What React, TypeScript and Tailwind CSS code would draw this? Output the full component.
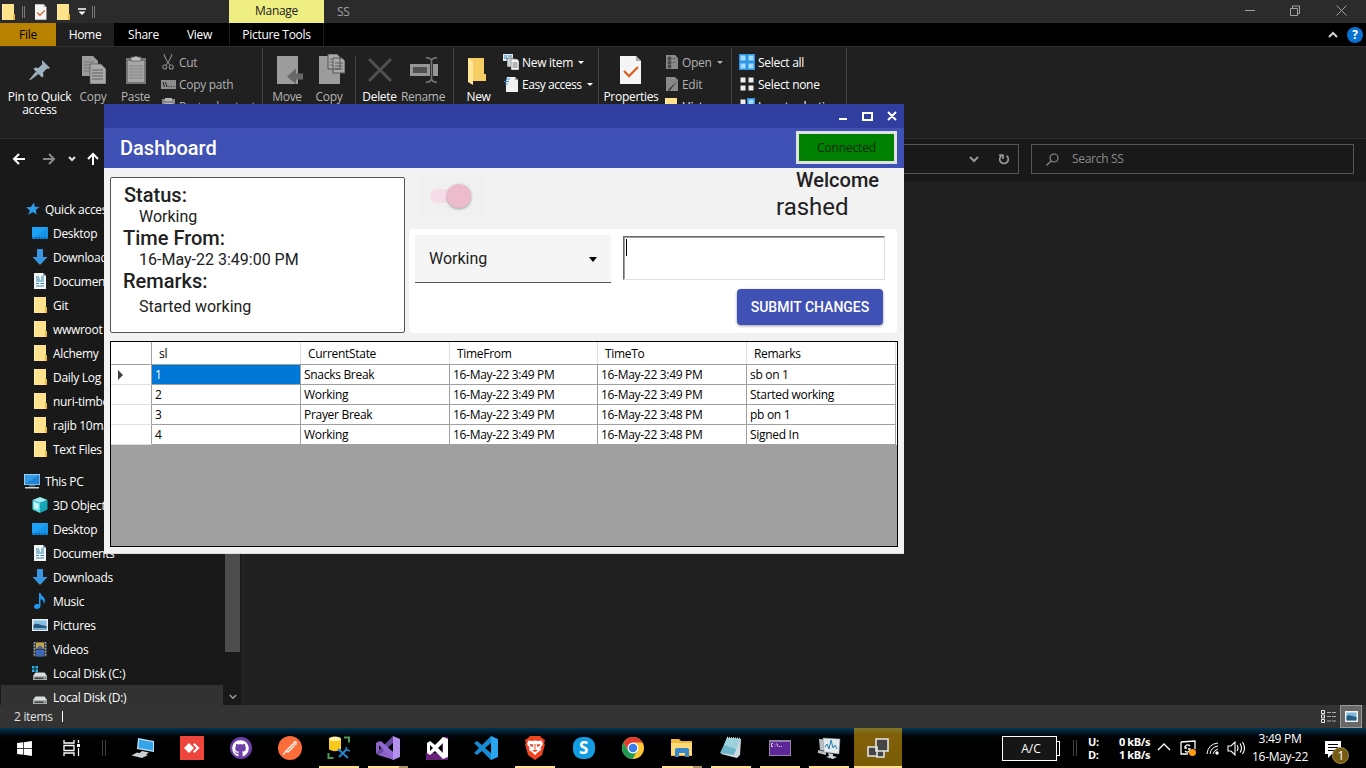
import type { ReactNode } from 'react';
import { FaGithub, FaWindows } from 'react-icons/fa';

type IconProps = { className?: string };

/* ---------- small file icons ---------- */

const Folder = ({ className = 'w-4 h-4' }: IconProps) => (
  <svg viewBox="0 0 16 16" className={className}>
    <path d="M2 0h12v10h1v6H2z" fill="#ffe38c" />
    <path d="M13 10h2v6h-2z" fill="#e8b93c" />
    <path d="M2 0h1v16H2z" fill="#fff0b8" />
  </svg>
);

const CheckDoc = ({ className = '' }: IconProps) => (
  <svg viewBox="0 0 22 28" className={className}>
    <path d="M0 0h16l5 5v23H0z" fill="#f5f5f5" />
    <path d="M16 0v5h5z" fill="#a9a9a9" />
    <path d="M4 15l5 5 9-9" stroke="#d9622b" strokeWidth="2.4" fill="none" />
  </svg>
);

const Star = () => (
  <svg viewBox="0 0 14 14" className="w-[14px] h-[14px]">
    <path d="M8 0.5l.8 4.300 4.900.3-3.800 2.700.7 4.700-3.700-2.500L2.200 13l1.700-4.600L0 5.300l4.900-.4z" fill="#2f9be8" />
  </svg>
);

const DesktopIcon = () => (
  <svg viewBox="0 0 16 16" className="w-4 h-4">
    <rect y="2" width="16" height="12" fill="#1ba1f5" />
    <path d="M0 14L16 2v12z" fill="#1593e6" />
    <path d="M0 13h16" stroke="#0b5fa8" strokeWidth="1.4" strokeDasharray="2 1" />
  </svg>
);

const DownIcon = () => (
  <svg viewBox="0 0 16 16" className="w-4 h-4">
    <path d="M5 0h6v8h4.5L8 16 .5 8H5z" fill="#3a96e2" />
  </svg>
);

const DocIcon = () => (
  <svg viewBox="0 0 16 16" className="w-4 h-4">
    <path d="M2 0h9l3 3v13H2z" fill="#f3f6f8" />
    <path d="M4 4h3M9 4h3M4 6h4M9 6h3M4 8h8M4 10.5h3M8.500 10.500h3.500M4 13h8" stroke="#3883ad" strokeWidth="1.200" />
    <path d="M11 0v3h3z" fill="#9aa7b0" />
  </svg>
);

const PcIcon = () => (
  <svg viewBox="0 0 16 16" className="w-4 h-4">
    <rect y="1" width="16" height="11" fill="#b9e4fa" />
    <rect x="0.700" y="1.700" width="14.600" height="9.600" fill="#379be6" />
    <path d="M.7 11.300L15.300 1.700v9.600z" fill="#2384d6" />
    <path d="M5 12h6v1.500H5z" fill="#62717a" />
    <path d="M1 14h14v1.500H1z" fill="#d3d8db" />
  </svg>
);

const CubeIcon = () => (
  <svg viewBox="0 0 16 16" className="w-4 h-4">
    <path d="M8 0l7.500 3-7.500 3L.5 3z" fill="#9cecf0" />
    <path d="M.5 3L8 6v10L.5 12.500z" fill="#5fdbe2" />
    <path d="M15.500 3L8 6v10l7.500-3.500z" fill="#17a5b8" />
    <path d="M2 5l4.500 1.800v6L2 11z" fill="#c7f7f8" />
  </svg>
);

const MusicIcon = () => (
  <svg viewBox="0 0 16 16" className="w-4 h-4">
    <path d="M7 0h1.500c.4 3 4.500 3.600 4.500 7.500 0 1.500-.5 2.700-1.300 3.500.4-2.500-.7-4.400-3.200-5V12.500C8.500 14.500 7 16 5 16s-3-1-3-2.500S3.300 11 5 11c.8 0 1.400.1 2 .4z" fill="#1e9bf0" />
  </svg>
);

const PictureIcon = () => (
  <svg viewBox="0 0 16 16" className="w-4 h-4">
    <rect y="2" width="16" height="12" fill="#e9eef1" />
    <rect x="1.500" y="3.500" width="13" height="9" fill="#85bfe6" />
    <path d="M1.500 8c3-3 6 0 13 1v3.500h-13z" fill="#27587c" />
    <path d="M1.500 11h13v1.500h-13z" fill="#7cb6dc" />
  </svg>
);

const VideoIcon = () => (
  <svg viewBox="0 0 16 16" className="w-4 h-4">
    <rect x="1" y="1" width="14" height="14.500" fill="#3d4043" />
    <rect x="4" y="1.500" width="8" height="6.500" fill="#c5a64c" />
    <rect x="4" y="9" width="8" height="6.500" fill="#3969c4" />
    <path d="M4 8l4-4 4 4zM5 14l3-3 4 4z" fill="#47669c" />
    <path d="M2.500 1v15M13.500 1v15" stroke="#aab0b3" strokeWidth="1.300" strokeDasharray="1.500 1.500" />
  </svg>
);

const DiskIcon = ({ system = false }: { system?: boolean }) => (
  <svg viewBox="0 0 16 16" className="w-4 h-4">
    {system && <path d="M0 1h2.500v2.500H0zM3.500 1H6v2.500H3.500zM0 4.500h2.500V7H0zM3.500 4.500H6V7H3.500z" fill="#27b5e8" />}
    <path d="M3.500 7.500h9L15 11H1z" fill="#d9dcdd" />
    <path d="M1 11h14v4H1z" fill="#a9adae" />
    <path d="M2.500 12.500h11v1.500h-11z" fill="#3a3d3e" />
    <path d="M11.500 12.600h1.500v1.200h-1.500z" fill="#9be37d" />
  </svg>
);

/* ---------- explorer chrome ---------- */

const Chevron = ({ className = '' }: IconProps) => (
  <svg viewBox="0 0 10 7" className={className} fill="none" stroke="currentColor" strokeWidth="2">
    <path d="M1 1l4 4 4-4" />
  </svg>
);

const TitleBar = () => (
  <div className="flex h-[23px] bg-[#2b2b2b]">
    <div className="flex w-[229px] items-center">
      <Folder className="w-[16px] h-[16px]" />
      <div className="ml-[6px] h-[12px] w-[3px] border-x border-[#777]" />
      <CheckDoc className="ml-[10px] h-[16px] w-[12px]" />
      <Folder className="ml-[8px] w-[16px] h-[16px]" />
      <svg viewBox="0 0 8 8" className="ml-[7px] h-[8px] w-[8px]">
        <path d="M0 1h8" stroke="#fff" strokeWidth="1.500" />
        <path d="M.5 3.500h7L4 7z" fill="#fff" />
      </svg>
      <div className="ml-[6px] h-[12px] w-[3px] border-x border-[#777]" />
    </div>
    <div className="flex w-[95px] items-center justify-center bg-[#eeee82] pb-[2px] text-[#222]">Manage</div>
    <div className="flex flex-1 items-center pl-[13px] text-[#a0a0a0]">SS</div>
    <svg viewBox="0 0 102 12" className="mr-[19px] mt-[4px] h-[12px] w-[102px]" fill="none" stroke="#a2a2a2">
      <path d="M0 6.500h10M45.500 4.500h7v7h-7zM47.500 4.500v-2.500h7v7.500h-2M91.500 1.500l10 10M101.500 1.500l-10 10" />
    </svg>
  </div>
);

const Tabs = () => (
  <div className="flex h-[23px] bg-black text-white">
    <div className="flex w-[56px] items-center justify-center bg-[#b88200] pt-px text-black">File</div>
    <div className="flex w-[58px] items-center justify-center bg-[#202020] pt-px">Home</div>
    <div className="flex w-[58px] items-center justify-center pt-px pl-px">Share</div>
    <div className="flex w-[57px] items-center justify-center pr-[2px] pt-px">View</div>
    <div className="flex w-[95px] items-center justify-center border-x border-[#1c1c1c] pt-px">Picture Tools</div>
    <div className="flex flex-1 items-center justify-end gap-[9px] pr-[3px]">
      <Chevron className="h-[7px] w-[10px] rotate-180 text-[#d0d0d0]" />
      <div className="flex h-4 w-4 items-center justify-center rounded-full bg-[#0873d1] text-[12px] font-bold">?</div>
    </div>
  </div>
);

const BigTool = ({ icon, label, className }: { icon: ReactNode; label: ReactNode; className: string }) => (
  <div className={`flex shrink-0 flex-col items-center text-center leading-[13px] ${className}`}>
    <div className="flex h-[42px] items-center justify-center pt-[2px]">{icon}</div>
    <div className="whitespace-nowrap">{label}</div>
  </div>
);

const SmallTool = ({ icon, label, dim = false, arrow = false }: { icon: ReactNode; label: string; dim?: boolean; arrow?: boolean }) => (
  <div className={`flex h-[22px] items-center whitespace-nowrap ${dim ? 'text-[#b0b0b0]' : 'text-white'}`}>
    <div className="flex w-[16px] shrink-0 justify-center">{icon}</div>
    <span className="ml-[3px] pt-px">{label}</span>
    {arrow && <span className="ml-[5px] h-0 w-0 border-x-[3px] border-t-[3px] border-x-transparent border-t-current" />}
  </div>
);

const Sep = ({ className = '' }: IconProps) => <div className={`w-px shrink-0 bg-[#454545] ${className}`} />;

const PinIcon = () => (
  <svg viewBox="0 0 22 22" className="h-[22px] w-[22px]" fill="#9fb1bd">
    <path d="M13 1l8 8-2 1-1-.5-4 4 .5 3.500-1.500 1.500L4.500 10 6 8.500l3.500.5 4-4-.5-1z" />
    <path d="M7 12.500l2.500 2.500L1.500 21l-1 0 .3-1z" />
  </svg>
);

const CopyIcon = () => (
  <svg viewBox="0 0 24 28" className="ml-[2px] h-[28px] w-[24px]">
    <path d="M0 0h11l5 5v15H0z" fill="#9b9b9b" />
    <path d="M2 6h10M2 9h10M2 12h10M2 15h10" stroke="#777" />
    <path d="M8 8h11l5 5v15H8z" fill="#a9a9a9" stroke="#555" strokeWidth="0.700" />
    <path d="M10 14h11M10 17h11M10 20h11M10 23h11" stroke="#626262" strokeWidth="1.200" />
  </svg>
);

const PasteIcon = () => (
  <svg viewBox="0 0 20 28" className="h-[28px] w-[20px]">
    <path d="M0 2h20v26H0z" fill="#777" />
    <path d="M2 5h16v21H2z" fill="#a6a6a6" />
    <path d="M5 1h3q2-2 4 0h3v4H5z" fill="#bbb" stroke="#555" strokeWidth="0.700" />
    <path d="M3 10h14M3 13h14M3 16h14M3 19h14M3 22h14" stroke="#858585" />
  </svg>
);

const MoveIcon = () => (
  <svg viewBox="0 0 26 28" className="ml-[5px] h-[28px] w-[26px]">
    <path d="M0 0h21v28H0z" fill="#9c9c9c" />
    <path d="M10 20.500l9-8v5h7v6h-7v4.500z" fill="#686868" />
  </svg>
);

const CopyToIcon = () => (
  <svg viewBox="0 0 26 30" className="mb-[2px] ml-[5px] h-[30px] w-[26px]">
    <path d="M0 2h21v28H0z" fill="#9c9c9c" />
    <path d="M9 0h9l3 3v12H9zM14 4h9l3 3v12H14z" fill="#aaa" stroke="#555" />
    <path d="M16 9h8M16 12h8M16 15h8M11 5h2M11 8h2M11 11h2" stroke="#5d5d5d" />
  </svg>
);

const RenameIcon = () => (
  <svg viewBox="0 0 28 26" className="ml-[2px] h-[26px] w-[28px]">
    <path d="M0 7h20v12H0zM23 7h5v12h-5z" fill="#969696" />
    <path d="M3 10h14v6H3z" fill="#505050" />
    <path d="M16 .7q5 0 5.500 3v18q-.5 3.500-5.500 3.500M27 .7q-5 0-5.500 3v18q.5 3.500 5.500 3.500" fill="none" stroke="#777" strokeWidth="1.600" />
  </svg>
);

const GridIcon = ({ kind }: { kind: 'all' | 'none' | 'invert' }) => (
  <svg viewBox="0 0 16 16" className="h-4 w-4">
    {kind === 'all' && <rect width="16" height="16" fill="#2d97e5" />}
    {kind === 'invert' && <path d="M8 0h8v16H8z" fill="#2d97e5" />}
    <path d="M1.500 1.500h5v5h-5zM1.500 9.500h5v5h-5z" fill={kind === 'all' ? '#a4daff' : '#eee'} />
    <path d="M9.500 1.500h5v5h-5zM9.500 9.500h5v5h-5z" fill={kind === 'none' ? '#eee' : '#a4daff'} />
  </svg>
);

const ScissorsIcon = () => (
  <svg viewBox="0 0 12 16" className="h-4 w-3" fill="none" stroke="#8b8b8b" strokeWidth="1.100">
    <path d="M2 0q1 5 6 11M10 0Q9 5 4 11" />
    <circle cx="2.700" cy="13" r="2" />
    <circle cx="9.300" cy="13" r="2" />
  </svg>
);

const PathIcon = () => (
  <svg viewBox="0 0 15 9" className="h-[9px] w-[15px]">
    <path d="M0 0h15v9H0z" fill="#8d8d8d" />
    <path d="M2 2l1.500 5M4.500 2L6 7M7.500 6.500h1M10 6.500h1M12.500 6.500h1" stroke="#222" />
  </svg>
);

const ShortcutIcon = () => (
  <svg viewBox="0 0 13 16" className="h-4 w-[13px]">
    <path d="M0 1h13v15H0z" fill="#888" />
    <path d="M3 0h7v3H3zM2.500 5h8v9h-8z" fill="#b5b5b5" />
    <path d="M5 11V7h4v4" fill="none" stroke="#444" />
  </svg>
);

const NewItemIcon = () => (
  <svg viewBox="0 0 16 16" className="h-4 w-4">
    <path d="M0 0h10v7H0z" fill="#dcecf5" />
    <path d="M1 2h3M5 2h4M1 4h3" stroke="#3f87b8" />
    <path d="M4 4h7v9H4z" fill="#cfd8de" stroke="#222" strokeWidth="0.500" />
    <path d="M8 5h6l2 2v9H8z" fill="#f3f3f3" stroke="#555" strokeWidth="0.500" />
    <path d="M9.500 9h5M9.500 11h5M9.500 13h5" stroke="#777" />
  </svg>
);

const EasyIcon = () => (
  <svg viewBox="0 0 16 16" className="h-4 w-4">
    <path d="M4 1h8l3 3v12H3V6z" fill="#f1f1f1" />
    <path d="M12 1v3h3z" fill="#999" />
    <path d="M3 3h4M1 5.500h5M2 8h3" stroke="#3095d8" strokeWidth="1.200" />
  </svg>
);

const OpenIcon = ({ pencil = false }: { pencil?: boolean }) => (
  <svg viewBox="0 0 13 16" className="h-4 w-[13px]">
    <path d="M1 1h9l3 3v11H1z" fill="#898989" />
    {pencil ? (
      <path d="M12.500 5L5 14.500l-2 1 .5-2.500z" fill="#444" />
    ) : (
      <path d="M3 3h3v3H3zM3 7h3v3H3zM3 11h3v3H3zM7.500 4.500h3M7.500 8.500h3" fill="#4d4d4d" stroke="#4d4d4d" strokeWidth="0.700" />
    )}
  </svg>
);

const Ribbon = () => (
  <div className="flex h-[93px] overflow-hidden border-y border-[#2f2f2f] bg-[#202020] pt-[1px] text-[#b4b4b4]">
    <BigTool className="w-[78px] pl-px text-white" icon={<PinIcon />} label={<>Pin to Quick<br />access</>} />
    <BigTool className="w-[30px]" icon={<CopyIcon />} label="Copy" />
    <BigTool className="w-[52px] pl-[3px]" icon={<PasteIcon />} label="Paste" />
    <div className="w-[102px] pt-[3px]">
      <SmallTool dim icon={<ScissorsIcon />} label="Cut" />
      <SmallTool dim icon={<PathIcon />} label="Copy path" />
      <SmallTool dim icon={<ShortcutIcon />} label="Paste shortcut" />
    </div>
    <Sep />
    <BigTool className="w-[48px]" icon={<MoveIcon />} label="Move" />
    <BigTool className="w-[36px]" icon={<CopyToIcon />} label="Copy" />
    <div className="w-[8px] shrink-0" />
    <Sep className="mt-[8px]" />
    <BigTool
      className="w-[46px] pl-px text-white"
      icon={
        <svg viewBox="0 0 24 24" className="h-6 w-6" stroke="#505050" strokeWidth="3">
          <path d="M1 1l22 22M23 1L1 23" />
        </svg>
      }
      label="Delete"
    />
    <BigTool className="w-[42px]" icon={<RenameIcon />} label="Rename" />
    <div className="w-[9px] shrink-0" />
    <Sep />
    <BigTool
      className="w-[48px] pl-px text-white"
      icon={
        <svg viewBox="0 0 18 28" className="mr-[3px] mt-[2px] h-[28px] w-[18px]">
          <path d="M0 1h16v16h2v7H0z" fill="#f5cd62" />
          <path d="M0 1l5 3v24l-5-3z" fill="#ffe69b" />
        </svg>
      }
      label="New"
    />
    <div className="w-[96px] pl-[1px] pt-[3px]">
      <SmallTool arrow icon={<NewItemIcon />} label="New item" />
      <div className="tracking-[-0.450px]">
        <SmallTool arrow icon={<EasyIcon />} label="Easy access" />
      </div>
    </div>
    <Sep />
    <BigTool className="w-[64px] text-white" icon={<CheckDoc className="h-[28px] w-[22px]" />} label="Properties" />
    <div className="w-[68px] pt-[3px]">
      <SmallTool dim arrow icon={<OpenIcon />} label="Open" />
      <SmallTool dim icon={<OpenIcon pencil />} label="Edit" />
      <SmallTool icon={<Folder className="h-4 w-4" />} label="History" />
    </div>
    <Sep />
    <div className="w-[114px] pl-[7px] pt-[3px]">
      <SmallTool icon={<GridIcon kind="all" />} label="Select all" />
      <SmallTool icon={<GridIcon kind="none" />} label="Select none" />
      <SmallTool icon={<GridIcon kind="invert" />} label="Invert selection" />
    </div>
    <Sep />
  </div>
);

const AddressRow = () => (
  <div className="flex h-[42px] items-center bg-[#191919] pb-[2px] pr-[12px]">
    <svg viewBox="0 0 104 14" className="h-[14px] w-[104px]" fill="none" strokeWidth="2">
      <path d="M25 7H14M19 2l-5 5 5 5" stroke="#fff" />
      <path d="M43 7h11M49 2l5 5-5 5" stroke="#888" />
      <path d="M69 5l3 3 3-3" stroke="#ddd" />
      <path d="M93 13V2M88 7l5-5 5 5" stroke="#fff" />
    </svg>
    <div className="flex h-[30px] flex-1 items-center justify-end gap-[19px] border border-[#555] pr-[8px] text-[#999]">
      <Chevron className="h-[7px] w-[10px]" />
      <svg viewBox="0 0 12 12" className="h-[12px] w-[12px]" fill="none" stroke="currentColor" strokeWidth="1.700">
        <path d="M8.500 2.700a4.300 4.300 0 1 1-5 0M1 2h4v4" />
      </svg>
    </div>
    <div className="ml-[12px] flex h-[30px] w-[323px] items-center border border-[#555] pl-[14px] text-[#8a8a8a]">
      <svg viewBox="0 0 13 13" className="h-[13px] w-[13px]" fill="none" stroke="currentColor" strokeWidth="1.200">
        <circle cx="8" cy="5" r="4" />
        <path d="M5 8L.5 12.500" />
      </svg>
      <span className="ml-[13px]">Search SS</span>
    </div>
  </div>
);

const quick: [ReactNode, string][] = [
  [<DesktopIcon />, 'Desktop'],
  [<DownIcon />, 'Downloads'],
  [<DocIcon />, 'Documents'],
  [<Folder />, 'Git'],
  [<Folder />, 'wwwroot'],
  [<Folder />, 'Alchemy'],
  [<Folder />, 'Daily Log'],
  [<Folder />, 'nuri-timber'],
  [<Folder />, 'rajib 10mar'],
  [<Folder />, 'Text Files'],
];

const pc: [ReactNode, string][] = [
  [<CubeIcon />, '3D Objects'],
  [<DesktopIcon />, 'Desktop'],
  [<DocIcon />, 'Documents'],
  [<DownIcon />, 'Downloads'],
  [<MusicIcon />, 'Music'],
  [<PictureIcon />, 'Pictures'],
  [<VideoIcon />, 'Videos'],
  [<DiskIcon system />, 'Local Disk (C:)'],
  [<DiskIcon />, 'Local Disk (D:)'],
];

const TreeRow = ({ icon, label, active = false }: { icon: ReactNode; label: string; active?: boolean }) => (
  <div className={`flex h-6 items-center whitespace-nowrap pl-[31px] ${active ? 'ml-px bg-[#323232]' : 'ml-px'}`}>
    {icon}
    <span className="ml-[5px] pt-px">{label}</span>
  </div>
);

const Sidebar = () => (
  <div className="flex h-[524px] w-[243px] shrink-0 overflow-hidden border-r border-[#2a2a2a] bg-[#191919] text-white">
    <div className="w-[223px] pt-4">
      <div className="flex h-6 items-center pl-[26px]"><Star /><span className="ml-[5px] pt-px">Quick access</span></div>
      {quick.map(([icon, label]) => <TreeRow key={label} icon={icon} label={label} />)}
      <div className="mt-2 flex h-6 items-center pl-6"><PcIcon /><span className="ml-[5px] pt-px">This PC</span></div>
      {pc.map(([icon, label]) => <TreeRow key={label} icon={icon} label={label} active={label.includes('D:')} />)}
    </div>
    <div className="ml-[2px] flex w-[15px] flex-col items-center">
      <div className="mt-[169px] h-[302px] w-[15px] bg-[#4d4d4d]" />
      <Chevron className="mt-[42px] h-[6px] w-[8px] text-[#999]" />
    </div>
  </div>
);

const StatusBar = () => (
  <div className="flex h-[23px] items-center bg-[#333] pl-[14px] text-[#e0e0e0]">
    <span className="w-[38px] whitespace-nowrap">2 items</span>
    <div className="ml-[10px] h-[11px] w-px bg-white" />
    <div className="flex-1" />
    <svg viewBox="0 0 16 14" className="h-[14px] w-4" fill="none">
      <path d="M.5.5h3v3h-3zM.5 5h3v3h-3zM.5 9.500h3v3h-3z" stroke="#eee" />
      <path d="M6 2.500h10M6 6.500h10M6 11h10" stroke="#aaa" strokeDasharray="4 1" />
    </svg>
    <div className="ml-[3px] mr-[4px] flex h-[23px] w-[22px] items-center justify-center border border-[#999] bg-[#686868]">
      <svg viewBox="0 0 13 11" className="h-[11px] w-[13px]">
        <path d="M0 0h13v11H0z" fill="#f4f4f4" />
        <path d="M1.500 1.500h10v8h-10z" fill="#7fb8df" />
        <path d="M1.500 5c3-2 5 0 10 1v3.500h-10z" fill="#285d83" />
      </svg>
    </div>
  </div>
);

/* ---------- dashboard window ---------- */

const rows = [
  ['1', 'Snacks Break', '16-May-22 3:49 PM', '16-May-22 3:49 PM', 'sb on 1'],
  ['2', 'Working', '16-May-22 3:49 PM', '16-May-22 3:49 PM', 'Started working'],
  ['3', 'Prayer Break', '16-May-22 3:49 PM', '16-May-22 3:48 PM', 'pb on 1'],
  ['4', 'Working', '16-May-22 3:49 PM', '16-May-22 3:48 PM', 'Signed In'],
];

const gridCols = 'grid grid-cols-[41px_149px_149px_148px_149px_149px]';

const DataGrid = () => (
  <div className="mt-2 h-[206px] border border-black bg-[#a0a0a0] text-black">
    <div className={`${gridCols} h-[23px] border-b border-[#a0a0a0] bg-white`}>
      <div className="border-r border-[#a0a0a0]" />
      {['sl', 'CurrentState', 'TimeFrom', 'TimeTo', 'Remarks'].map((h) => (
        <div key={h} className="flex items-center border-r border-[#dedede] pl-[7px] pt-[2px]">{h}</div>
      ))}
    </div>
    {rows.map((r, i) => (
      <div key={r[0]} className={`${gridCols} h-5 bg-white`}>
        <div className="flex items-center border-b border-r border-b-[#dedede] border-r-[#a0a0a0] pl-[7px] pt-px">
          {i === 0 && <span className="h-0 w-0 border-y-[5px] border-l-[5px] border-y-transparent border-l-[#404040]" />}
        </div>
        {r.map((c, j) => (
          <div
            key={j}
            className={`flex items-center whitespace-nowrap border-b border-r border-[#a0a0a0] pl-[3px] pt-px ${i === 0 && j === 0 ? 'bg-[#0078d7] text-white' : ''}`}
          >
            {c}
          </div>
        ))}
      </div>
    ))}
  </div>
);

const Dashboard = () => (
  <div className="absolute left-[104px] top-[104px] h-[450px] w-[800px] border-b border-[#ddd] bg-[#f2f2f2]">
    <div className="flex h-6 items-center justify-end bg-[#303f9f] pr-[7px]">
      <svg viewBox="0 0 58 10" className="h-[10px] w-[58px]" fill="none" stroke="#fff" strokeWidth="2">
        <path d="M0 8h8M24 2h9v7h-9zM49 1l8 8M57 1l-8 8" />
      </svg>
    </div>
    <div className="flex h-10 items-center justify-between bg-[#3f51b5] pl-4 pr-[7px] font-['Roboto',sans-serif] text-[20px] font-medium tracking-normal text-white">
      Dashboard
      <div className="mb-[2px] flex h-[33px] w-[101px] items-center justify-center border-[3px] border-[#e1e1e1] bg-[#008000] pt-px font-['Open_Sans',sans-serif] text-[12px] font-normal tracking-[-0.150px] text-[#0a2a0a]">
        Connected
      </div>
    </div>
    <div className="px-[6px]">
      <div className="flex font-['Roboto',sans-serif] tracking-normal text-[#212121]">
        <div className="mt-[9px] h-[156px] w-[295px] rounded-[2px] border border-[#555] bg-white pl-[12px] pt-[5px]">
          <div className="h-6 pl-px text-[20px] font-medium leading-6">Status:</div>
          <div className="h-[19px] pl-4 text-[16px] leading-[19px]">Working</div>
          <div className="h-6 text-[20px] font-medium leading-6">Time From:</div>
          <div className="h-[19px] pl-4 text-[16px] leading-[19px]">16-May-22 3:49:00 PM</div>
          <div className="h-6 text-[20px] font-medium leading-6">Remarks:</div>
          <div className="pl-4 pt-[4px] text-[16px] leading-[19px]">Started working</div>
        </div>
        <div className="ml-[4px] w-[488px]">
          <div className="flex h-[61px] justify-between">
            <div className="ml-[10px] mt-[9px] flex h-[38px] w-[66px] items-center bg-[#f0f0f0] pl-[11px]">
              <div className="flex h-[14px] w-[41px] items-center justify-end rounded-full bg-[#f6dce6]">
                <div className="h-6 w-6 shrink-0 rounded-full bg-[#ecbccd] shadow-[0_1px_3px_rgba(0,0,0,0.35)]" />
              </div>
            </div>
            <div className="w-[121px]">
              <div className="pl-[20px] text-[20px] font-medium leading-6">Welcome</div>
              <div className="text-[24px] leading-[30px]">rashed</div>
            </div>
          </div>
          <div className="flex h-[104px] rounded-[4px] bg-white pl-[6px] pt-[6px]">
            <div className="flex h-12 w-[196px] items-center justify-between border-b border-[#555] bg-[#f5f5f5] pl-[14px] pr-[14px] text-[16px]">
              Working
              <span className="mt-[2px] h-0 w-0 border-x-[4px] border-t-[5px] border-x-transparent border-t-black" />
            </div>
            <div className="ml-[12px] mt-px w-[262px]">
              <div className="h-11 border border-b-[#e0e0e0] border-l-[#6a6a6a] border-r-[#e0e0e0] border-t-[#6a6a6a] pl-[2px] pt-[2px] shadow-[inset_1px_1px_0_#a0a0a0]">
                <div className="h-[17px] w-px bg-black" />
              </div>
              <div className="ml-[114px] mt-[9px] flex h-9 w-[146px] items-center justify-center rounded-[4px] bg-[#3f51b5] text-[14px] font-medium text-white shadow-[0_1px_3px_rgba(0,0,0,0.4)]">
                SUBMIT CHANGES
              </div>
            </div>
          </div>
        </div>
      </div>
      <DataGrid />
    </div>
  </div>
);

/* ---------- taskbar ---------- */

const svg24 = 'h-6 w-6';

const apps: { name: string; icon: ReactNode; open?: boolean; stacked?: boolean }[] = [
  {
    name: 'remote',
    icon: (
      <svg viewBox="0 0 24 24" className={svg24}>
        <path d="M7 2l16 3v11L6 13z" fill="#bfe3f5" />
        <path d="M8 3.500l14 2.600v8.500L7.500 12z" fill="#36a4e8" />
        <path d="M11 15l7 1.500-3 2-7-1zM6 16.500l11 2.500-6 3L.5 19.500z" fill="#cbd0d2" />
      </svg>
    ),
  },
  {
    name: 'anydesk',
    icon: (
      <svg viewBox="0 0 24 24" className={svg24}>
        <path d="M0 0h24v24H0z" fill="#ef443b" />
        <path d="M9 7l5 5-5 5-5-5zM13 8.500l1.500-1.500 5 5-5 5L13 15.500l3.500-3.500z" fill="#fff" />
      </svg>
    ),
  },
  {
    name: 'github',
    icon: (
      <div className="flex h-[22px] w-[22px] items-center justify-center rounded-full bg-[#6e40aa] text-white">
        <FaGithub className="h-[17px] w-[17px]" />
      </div>
    ),
  },
  {
    name: 'postman',
    icon: (
      <svg viewBox="0 0 24 24" className={svg24}>
        <circle cx="12" cy="12" r="12" fill="#fa6c39" />
        <path d="M5 19l3-4 7-7M8 15.500l2 .5 6.500-6.500" fill="none" stroke="#fff" strokeWidth="1.200" />
        <circle cx="17" cy="7" r="2.200" fill="#fbd2bd" />
      </svg>
    ),
  },
  {
    name: 'ssms',
    open: true,
    icon: (
      <svg viewBox="0 0 24 24" className={svg24}>
        <path d="M2 2.500v11q6 3.500 12 0v-11z" fill="#f9c91e" />
        <ellipse cx="8" cy="2.800" rx="6" ry="2.300" fill="#fff0a0" />
        <path d="M17 1.500h5v5M1.500 17v5h5" fill="none" stroke="#4c9b51" strokeWidth="2" />
        <path d="M11 13l10 9M20 13l-8 8" stroke="#2285ce" strokeWidth="2" />
        <path d="M19 11l1 3 3 1" fill="none" stroke="#2285ce" strokeWidth="1.500" />
      </svg>
    ),
  },
  {
    name: 'visual studio',
    open: true,
    stacked: true,
    icon: (
      <svg viewBox="0 0 24 24" className={svg24}>
        <path d="M0 7l3-2 15 12v7L2 19l-2-2z" fill="#8b62c8" fillRule="evenodd" />
        <path d="M3 9v6l4-3z" fill="#000" />
        <path d="M0 17L17 0v7L3 19z" fill="#68499d" />
        <path d="M17 0l7 3v18l-7 3z" fill="#b391ef" />
        <path d="M5 5l12 11v8L2 8z" fill="#9168d2" />
      </svg>
    ),
  },
  {
    name: 'blend',
    icon: (
      <svg viewBox="0 0 24 24" className={svg24}>
        <path d="M1 17h22v7H1zM17 1h6v16h-6z" fill="#68217a" />
        <path d="M2 7l3-2 5 4 8-8 5 2v18l-5 2-8-8-5 4-3-2zM5 9v6l3-3zM18 7l-5 5 5 5z" fill="#fff" fillRule="evenodd" />
      </svg>
    ),
  },
  {
    name: 'vscode',
    icon: (
      <svg viewBox="0 0 24 24" className={svg24}>
        <path d="M17 0l-9 9-5-4-3 2 5 5-5 5 3 2 5-4 9 9 1-1V1zM17 7v10l-6-5z" fill="#168bd2" fillRule="evenodd" />
        <path d="M17 0l7 3v18l-7 3z" fill="#2aa4ed" />
      </svg>
    ),
  },
  {
    name: 'brave',
    open: true,
    icon: (
      <svg viewBox="0 0 24 24" className={svg24}>
        <path d="M7 0h10l2.500 2.500L22 4l-.8 3 .6 2-2.800 10-7 5-7-5L2.200 9l.6-2L2 4l2.500-1.500z" fill="#f04423" />
        <path d="M5.500 4.500L9 5l3-.5 3 .5 3.500-.5L20 8l-2.500 3.500.5 2.500-3.500 2.500L12 19l-2.500-2.500L6 14l.5-2.500L4 8z" fill="#fff" />
        <path d="M6.500 8l4 .5-1 2.500-1.500-.5zM17.500 8l-4 .5 1 2.500 1.500-.5zM11.500 8v5h1V8zM9 14.500l3-1 3 1-3 1.500z" fill="#ed4526" />
      </svg>
    ),
  },
  {
    name: 'skype',
    icon: (
      <div className="flex h-[22px] w-[22px] items-center justify-center rounded-[9px] bg-[#139ce0] text-[17px] font-bold text-white">S</div>
    ),
  },
  {
    name: 'chrome',
    icon: (
      <svg viewBox="0 0 24 24" className={svg24}>
        <circle cx="12" cy="12" r="11" fill="#fcc934" />
        <path d="M2.500 6.500A11 11 0 0 1 21.500 6.500H12L7.200 14.800z" fill="#e33b2e" />
        <path d="M2.500 6.500A11 11 0 0 0 11.500 23l4.800-8.200H7.200z" fill="#1e9b50" />
        <circle cx="12" cy="12" r="5.500" fill="#fff" />
        <circle cx="12" cy="12" r="4.300" fill="#3a7cec" />
      </svg>
    ),
  },
  {
    name: 'explorer',
    open: true,
    stacked: true,
    icon: (
      <svg viewBox="0 0 24 24" className={svg24}>
        <path d="M1 3h8l2 2h11v15H1z" fill="#f3b93e" />
        <path d="M1 7h21v12H1z" fill="#ffda76" />
        <path d="M5 21v-8l2-1h10l2 1v8h-4v-4H9v4z" fill="#3588c9" />
      </svg>
    ),
  },
  {
    name: 'notepad',
    open: true,
    icon: (
      <svg viewBox="0 0 24 24" className={svg24}>
        <path d="M8 2l14 1-1 16-3 3L2 18z" fill="#cfdcdd" />
        <path d="M8 2l13 1-6 16L1 17z" fill="#6eb6c9" />
        <path d="M8 2l13 1-4 10L5 9z" fill="#9ed3dd" />
        <path d="M8 1.500l14 1" stroke="#e8eded" strokeWidth="1.300" strokeDasharray="1 1" />
      </svg>
    ),
  },
  {
    name: 'console',
    open: true,
    icon: (
      <svg viewBox="0 0 24 24" className={svg24}>
        <path d="M1 4h22v16H1z" fill="#9280ad" />
        <path d="M2 6h20v13H2z" fill="#5c2697" />
        <path d="M5 7.500H3.500v3H5M7 8v.5M7 10v.5M8.500 7.500l1.500 3M11 10.500h1M13 10.500h1" stroke="#fff" strokeWidth="0.800" fill="none" />
      </svg>
    ),
  },
  {
    name: 'monitor',
    open: true,
    icon: (
      <svg viewBox="0 0 24 24" className={svg24}>
        <path d="M2 3l12 1v12l-11-2zM1 14l8 2v3l-8-2z" fill="#b7c1c5" />
        <path d="M6 2l17 1-1 15-15-2z" fill="#e4e9eb" stroke="#889398" strokeWidth="0.500" />
        <path d="M8 11l2-3 2 5 2-9 2 8 2-3 2 4" fill="none" stroke="#2381b4" />
        <path d="M11 17l5 1v2l4 1-4 2-7-2 3-1z" fill="#cbd2d5" />
      </svg>
    ),
  },
];

const Taskbar = () => (
  <div className="flex h-10 bg-[linear-gradient(#033452_0px,#021d30_4px,#020508_8px,#000_14px)] text-white">
    <div className="flex w-12 items-center justify-center"><FaWindows className="h-[17px] w-[17px]" /></div>
    <div className="flex w-12 items-center justify-center">
      <svg viewBox="0 0 18 16" className="h-4 w-[18px]" fill="none" stroke="#fff" strokeWidth="1.300">
        <path d="M1 0v3h10V0M1 5.500h10v5H1zM1 16v-3h10v3M15.500 0v3M15.500 8v8" />
        <path d="M14 4h3v3h-3z" fill="#fff" stroke="none" />
      </svg>
    </div>
    <div className="flex w-[22px] items-center pl-[6px]"><div className="h-4 w-[4px] border-x border-[#444]" /></div>
    {apps.map((a) => (
      <div key={a.name} className="flex w-[49px] flex-col items-center">
        <div className="flex h-[38px] items-center pt-[2px]">{a.icon}</div>
        {a.open && (
          <div className="flex h-[2px] w-10 bg-[#ffdf91]">
            {a.stacked && <div className="ml-auto w-[9px] bg-[#a89468]" />}
          </div>
        )}
      </div>
    ))}
    <div className="ml-[1px] flex w-12 items-center justify-center border-b-2 border-[#ffdf91] bg-[linear-gradient(#7d7628,#806008_7px,#7b5c07)] pt-[2px]">
      <svg viewBox="0 0 22 20" className="h-5 w-[22px]" fill="#454545" stroke="#e5e5e5" strokeWidth="1.600">
        <path d="M1 9h9v9H1zM9 1h12v12H9zM10 13h7v6h-7z" />
      </svg>
    </div>
    <div className="flex flex-1 items-center justify-end pr-[17px]">
      <div className="flex h-[25px] w-[55px] items-center justify-center border border-white bg-[#161616] pl-[3px] pt-px text-[12px] tracking-normal">A/C</div>
      <div className="h-[15px] w-[3px] border-y border-r border-white" />
      <div className="ml-[13px] h-4 w-[4px] border-x border-[#444]" />
      <div className="ml-[11px] w-[62px] text-[11px] font-bold leading-[13px] tracking-[-0.400px]">
        <div className="flex justify-between"><span>U:</span><span>0 kB/s</span></div>
        <div className="flex justify-between"><span>D:</span><span>1 kB/s</span></div>
      </div>
      <svg viewBox="0 0 88 20" className="ml-[7px] h-5 w-[88px]" fill="none" stroke="#fff" strokeWidth="1.300">
        <path d="M1 12l6-6 6 6" />
        <path d="M24 4l14-1v8M31 16h-7V4M33 8c-2-2-5-1-5 2M28 8v2h2M28 13c2 2 5 1 5-2M33 13v-2h-2" />
        <circle cx="35.500" cy="14.500" r="3.500" fill="#ff9a0a" stroke="none" />
        <path d="M50 16q1-10 11-11M53 16q1-7 8-8M56 16q1-4 5-5" strokeWidth="1" />
        <circle cx="60" cy="15" r="1.700" fill="#fff" stroke="none" />
        <path d="M71 8h3l4-4v13l-4-4h-3zM80 7q2 3 0 6M83 5.500q3 5 0 9M85.500 4q4 6 0 12" strokeWidth="1.100" />
      </svg>
      <div className="ml-[5px] mr-px w-[60px] whitespace-nowrap text-center leading-[18px]">
        <div>3:49 PM</div>
        <div>16-May-22</div>
      </div>
      <svg viewBox="0 0 24 26" className="ml-[14px] mt-[7px] h-[26px] w-6">
        <path d="M0 2h16v13H7l-4 4v-4H0z" fill="#fff" />
        <path d="M3 5.500h10M3 8.500h10M3 11.500h7" stroke="#000" />
        <circle cx="15.500" cy="16.500" r="8" fill="#765b13" stroke="#a28a48" />
        <text x="12.500" y="21" fill="#fff" fontSize="12" fontFamily="Open Sans">1</text>
      </svg>
    </div>
  </div>
);

export default function App() {
  return (
    <div className="relative h-[768px] w-[1366px] overflow-hidden bg-[#202020] font-['Open_Sans',sans-serif] text-[12px] tracking-[-0.300px]">
      <TitleBar />
      <Tabs />
      <Ribbon />
      <AddressRow />
      <Sidebar />
      <StatusBar />
      <Taskbar />
      <Dashboard />
    </div>
  );
}
